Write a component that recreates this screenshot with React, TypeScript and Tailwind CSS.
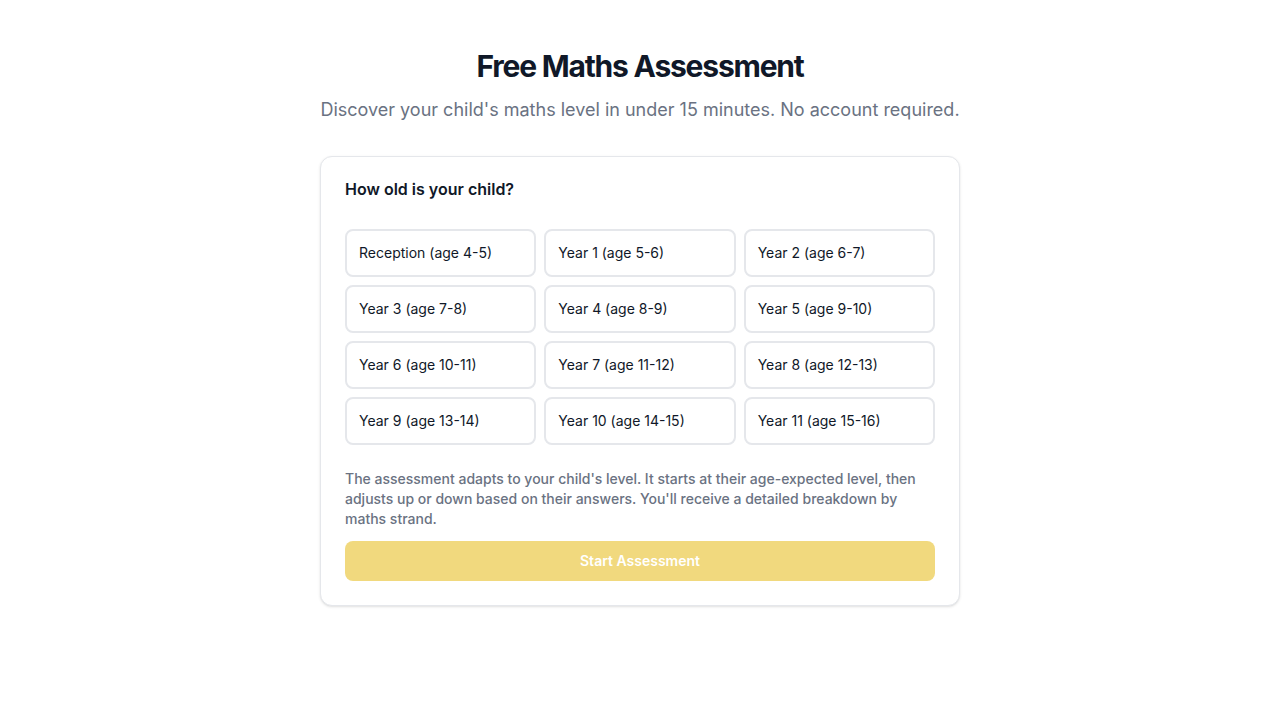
import React from "react";

const options = [
  "Reception (age 4-5)",
  "Year 1 (age 5-6)",
  "Year 2 (age 6-7)",
  "Year 3 (age 7-8)",
  "Year 4 (age 8-9)",
  "Year 5 (age 9-10)",
  "Year 6 (age 10-11)",
  "Year 7 (age 11-12)",
  "Year 8 (age 12-13)",
  "Year 9 (age 13-14)",
  "Year 10 (age 14-15)",
  "Year 11 (age 15-16)",
];

export default function App() {
  return (
    <div
      className="min-h-screen bg-white flex flex-col items-center pt-12"
      style={{ fontFamily: "Inter, 'Noto Sans', sans-serif" }}
    >
      <h1 className="text-3xl font-bold text-gray-900 tracking-[-0.04em]">Free Maths Assessment</h1>
      <p className="mt-3 text-lg text-gray-500">
        Discover your child's maths level in under 15 minutes. No account required.
      </p>
      <div className="mt-8 w-[640px] rounded-xl border border-gray-200 bg-white shadow-[0_1px_3px_0_rgba(0,0,0,0.1),0_1px_2px_-1px_rgba(0,0,0,0.1)] px-6 pt-5 pb-6">
        <h2 className="text-base font-semibold text-gray-900">How old is your child?</h2>
        <div className="mt-7 grid grid-cols-3 gap-2">
          {options.map((o) => (
            <button
              key={o}
              className="rounded-lg border-2 border-gray-200 bg-white px-3 py-3 text-left text-sm text-gray-900"
            >
              {o}
            </button>
          ))}
        </div>
        <p className="mt-6 text-sm font-medium text-gray-500 leading-5">
          The assessment adapts to your child's level. It starts at their age-expected level, then adjusts up or down
          based on their answers. You'll receive a detailed breakdown by maths strand.
        </p>
        <button className="mt-3 w-full rounded-lg bg-[#f1d97e] py-2.5 text-sm font-semibold text-white">
          Start Assessment
        </button>
      </div>
    </div>
  );
}
